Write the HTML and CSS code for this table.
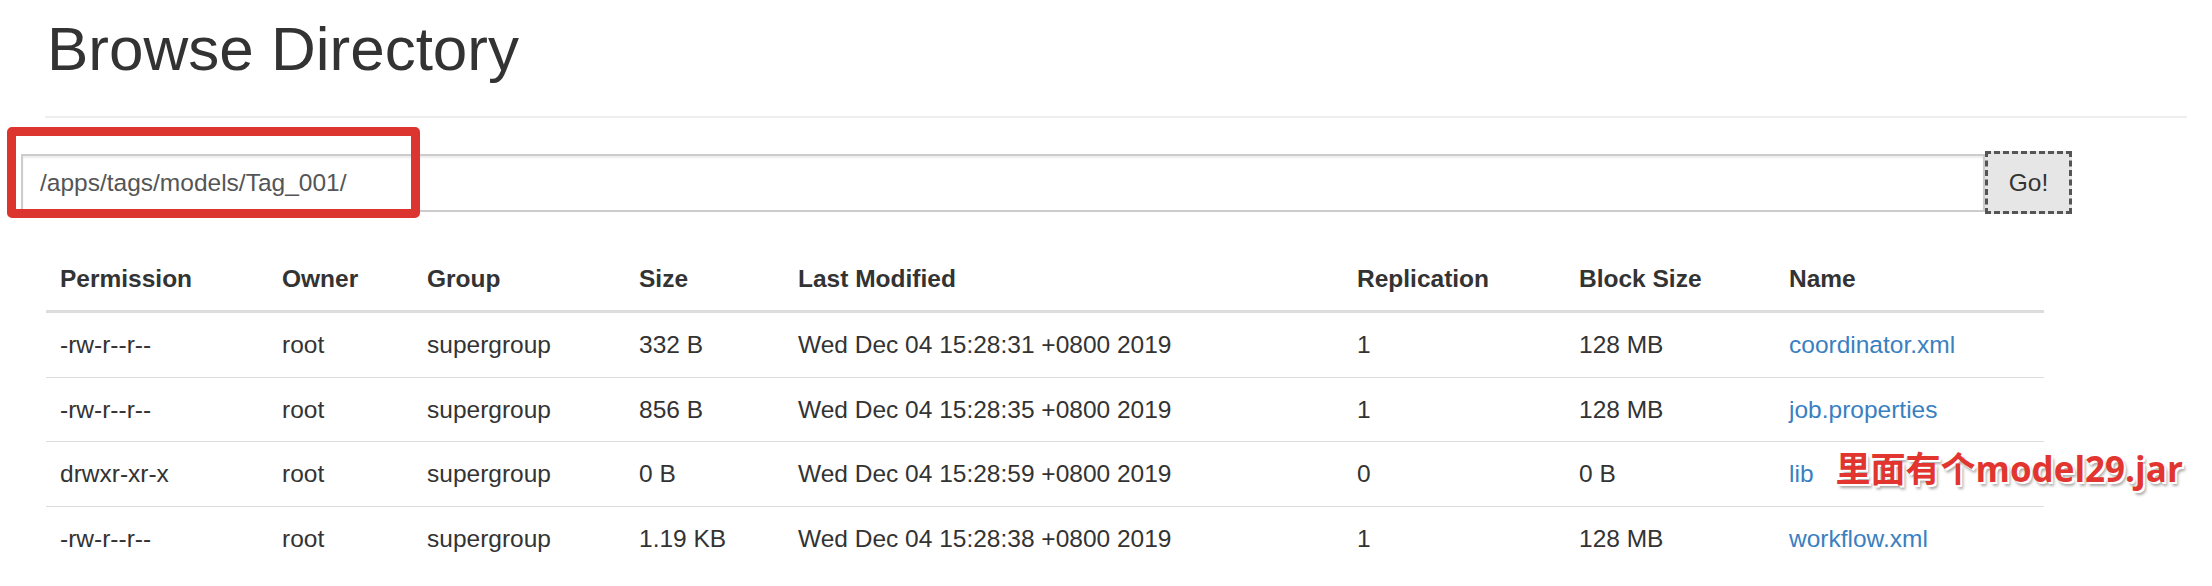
FILE: index.html
```html
<!DOCTYPE html>
<html lang="en">
<head>
<meta charset="utf-8">
<title>Browse Directory</title>
<link rel="stylesheet" href="styles.css">
</head>
<body>
<div class="page-header">
  <h1>Browse Directory</h1>
</div>
<form class="path-form">
  <input class="path-input" type="text" value="/apps/tags/models/Tag_001/">
  <button class="go-btn" type="button">Go!</button>
  <span class="highlight-box"></span>
</form>
<table class="listing">
  <colgroup>
    <col class="c-perm"><col class="c-owner"><col class="c-group"><col class="c-size">
    <col class="c-mod"><col class="c-repl"><col class="c-block"><col class="c-name">
  </colgroup>
  <thead>
    <tr>
      <th>Permission</th><th>Owner</th><th>Group</th><th>Size</th>
      <th>Last Modified</th><th>Replication</th><th>Block Size</th><th>Name</th>
    </tr>
  </thead>
  <tbody>
    <tr>
      <td>-rw-r--r--</td><td>root</td><td>supergroup</td><td>332 B</td>
      <td>Wed Dec 04 15:28:31 +0800 2019</td><td>1</td><td>128 MB</td>
      <td><a href="#">coordinator.xml</a></td>
    </tr>
    <tr>
      <td>-rw-r--r--</td><td>root</td><td>supergroup</td><td>856 B</td>
      <td>Wed Dec 04 15:28:35 +0800 2019</td><td>1</td><td>128 MB</td>
      <td><a href="#">job.properties</a></td>
    </tr>
    <tr>
      <td>drwxr-xr-x</td><td>root</td><td>supergroup</td><td>0 B</td>
      <td>Wed Dec 04 15:28:59 +0800 2019</td><td>0</td><td>0 B</td>
      <td class="name-cell"><a href="#">lib</a><span class="note">里面有个model29.jar</span></td>
    </tr>
    <tr>
      <td>-rw-r--r--</td><td>root</td><td>supergroup</td><td>1.19 KB</td>
      <td>Wed Dec 04 15:28:38 +0800 2019</td><td>1</td><td>128 MB</td>
      <td><a href="#">workflow.xml</a></td>
    </tr>
  </tbody>
</table>
</body>
</html>
```
FILE: styles.css
```css
html, body {
  margin: 0;
  padding: 0;
  background: #fff;
}
body {
  font-family: "Liberation Sans", Arial, sans-serif;
  font-size: 24.5px;
  color: #333;
}
.page-header {
  margin: 15px 25px 0 45px;
  padding-bottom: 33px;
  border-bottom: 2px solid #eee;
}
.page-header h1 {
  margin: 0;
  padding-left: 2px;
  font-size: 62px;
  font-weight: normal;
  line-height: 68px;
  color: #333;
}
.path-form {
  position: relative;
  display: flex;
  align-items: center;
  margin: 33px 0 0 21px;
  width: 2051px;
}
.path-input {
  box-sizing: border-box;
  width: 1964px;
  height: 58px;
  margin: 0;
  padding: 0 0 0 17px;
  border: 2px solid #ccc;
  border-radius: 0;
  box-shadow: inset 0 2px 2px rgba(0, 0, 0, 0.08);
  font-family: "Liberation Sans", Arial, sans-serif;
  font-size: 24.5px;
  color: #555;
  outline: none;
}
.go-btn {
  box-sizing: border-box;
  width: 87px;
  height: 63px;
  margin: 0;
  padding: 0;
  border: 3px dashed #555;
  border-radius: 0;
  background: #e6e6e6;
  font-family: "Liberation Sans", Arial, sans-serif;
  font-size: 24.5px;
  color: #333;
}
.highlight-box {
  position: absolute;
  left: -14px;
  top: -24px;
  width: 413px;
  height: 91px;
  box-sizing: border-box;
  border: 9px solid #dc3530;
  border-radius: 5px;
  pointer-events: none;
}
.listing {
  margin: 33px 0 0 46px;
  width: 1998px;
  table-layout: fixed;
  border-collapse: collapse;
  border-spacing: 0;
}
.c-perm { width: 222px; }
.c-owner { width: 145px; }
.c-group { width: 212px; }
.c-size { width: 159px; }
.c-mod { width: 559px; }
.c-repl { width: 222px; }
.c-block { width: 210px; }
.c-name { width: 269px; }
.listing th,
.listing td {
  padding: 14px;
  line-height: 35px;
  text-align: left;
  white-space: nowrap;
  overflow: visible;
}
.listing th {
  font-weight: bold;
  vertical-align: bottom;
  border-bottom: 3.5px solid #ddd;
}
.listing td {
  padding: 14.3px 14px;
  border-top: 1.75px solid #ddd;
  vertical-align: top;
}
.listing a {
  color: #3a7fc0;
  text-decoration: none;
}
.note {
  margin-left: 22px;
  font-family: "Open Sans", "Noto Sans CJK SC", sans-serif;
  font-weight: bold;
  font-size: 35px;
  line-height: 20px;
  color: #e2352f;
  text-shadow: 2px 2px 0 #fff, 3px 4px 3px rgba(0, 0, 0, 0.35);
}
```
